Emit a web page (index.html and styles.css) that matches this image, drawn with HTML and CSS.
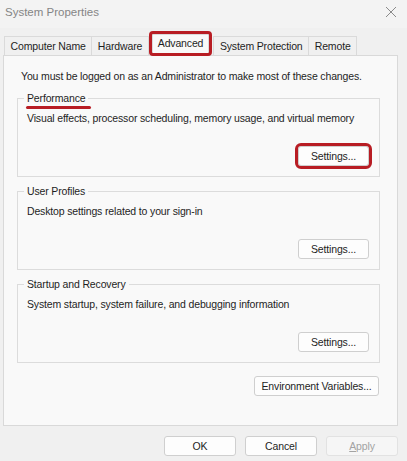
FILE: index.html
```html
<!DOCTYPE html>
<html>
<head>
<meta charset="utf-8">
<link rel="stylesheet" href="styles.css">
</head>
<body>
<div class="window">
  <div class="titlebar">
    <span class="title">System Properties</span>
    <svg class="close" width="12" height="12" viewBox="0 0 12 12"><path d="M1 1L11 11M11 1L1 11" stroke="#8a8a8a" stroke-width="1" fill="none"/></svg>
  </div>
  <div class="tabs">
    <div class="tab">Computer Name</div>
    <div class="tab">Hardware</div>
    <div class="tab active">Advanced</div>
    <div class="tab">System Protection</div>
    <div class="tab">Remote</div>
  </div>
  <div class="panel">
    <p class="note">You must be logged on as an Administrator to make most of these changes.</p>
    <fieldset class="group">
      <legend class="marked">Performance</legend>
      <p class="desc">Visual effects, processor scheduling, memory usage, and virtual memory</p>
      <div class="actions"><button class="btn highlight">Settings...</button></div>
    </fieldset>
    <fieldset class="group">
      <legend>User Profiles</legend>
      <p class="desc">Desktop settings related to your sign-in</p>
      <div class="actions"><button class="btn">Settings...</button></div>
    </fieldset>
    <fieldset class="group">
      <legend>Startup and Recovery</legend>
      <p class="desc">System startup, system failure, and debugging information</p>
      <div class="actions"><button class="btn">Settings...</button></div>
    </fieldset>
    <div class="env"><button class="btn wide">Environment Variables...</button></div>
  </div>
  <div class="footer">
    <button class="btn foot">OK</button>
    <button class="btn foot">Cancel</button>
    <button class="btn foot disabled"><u>A</u>pply</button>
  </div>
</div>
</body>
</html>
```
FILE: styles.css
```css
* { box-sizing: border-box; }
body {
  margin: 0;
  background: #f0f0f0;
  font-family: "Liberation Sans", Arial, sans-serif;
  font-size: 10.5px;
  letter-spacing: -0.15px;
  color: #1e1e1e;
  width: 407px;
  height: 461px;
  overflow: hidden;
}
.titlebar {
  height: 28px;
  display: flex;
  align-items: center;
  justify-content: space-between;
  padding: 0 10px 4px 5px;
  background: #f3f3f3;
}
.title { color: #858585; font-size: 11.5px; letter-spacing: 0; }
.tabs {
  display: flex;
  align-items: flex-end;
  height: 27px;
  padding-left: 4px;
}
.tab {
  height: 19px;
  line-height: 18px;
  padding: 0 5.6px;
  border: 1px solid #dadada;
  border-bottom: none;
  background: #f0f0f0;
  margin-right: -1px;
}
.tab.active {
  position: relative;
  z-index: 2;
  height: 19px;
  line-height: 17px;
  padding: 0 5px;
  margin: 0 4px 2px 4px;
  background: #f9f9f9;
  outline: 3px solid #b81d24;
  border-radius: 1px;
}
.panel {
  margin-left: 3px;
  width: 395px;
  border: 1px solid #d9d9d9;
  background: #f9f9f9;
  padding: 13px 17px 29px 13px;
}
.note {
  margin: 0 0 8px 4px;
  line-height: 14px;
  white-space: nowrap;
}
.group {
  margin: 0 0 7px 0;
  border: 1px solid #dcdcdc;
  padding: 6px 10px 10px 9px;
  min-width: 0;
}
.group legend {
  padding: 0 3px;
  margin-left: -3px;
  line-height: 14px;
}
.marked { position: relative; }
.marked::after {
  content: "";
  position: absolute;
  left: 2px;
  right: -3px;
  bottom: -4px;
  height: 3px;
  border-radius: 2px;
  background: #b81d24;
}
.desc { margin: 0; line-height: 14px; white-space: nowrap; }
.actions {
  display: flex;
  justify-content: flex-end;
  margin-top: 21px;
}
.btn {
  font-family: inherit;
  font-size: 10.5px;
  letter-spacing: -0.15px;
  color: #1e1e1e;
  height: 20px;
  width: 71px;
  padding: 0;
  border: 1px solid #cfcfcf;
  border-radius: 3px;
  background: #fdfdfd;
}
.btn.highlight {
  outline: 3px solid #b81d24;
  outline-offset: 0px;
}
.env {
  display: flex;
  justify-content: flex-end;
  margin-top: 13px;
  padding-right: 1px;
}
.btn.wide { width: 125px; }
.footer {
  display: flex;
  justify-content: flex-end;
  gap: 9px;
  margin-top: 10px;
  padding-right: 9px;
}
.btn.foot { width: 72px; }
.btn.disabled {
  color: #a3a3a3;
  border-color: #e2e2e2;
  background: #f6f6f6;
}
```
